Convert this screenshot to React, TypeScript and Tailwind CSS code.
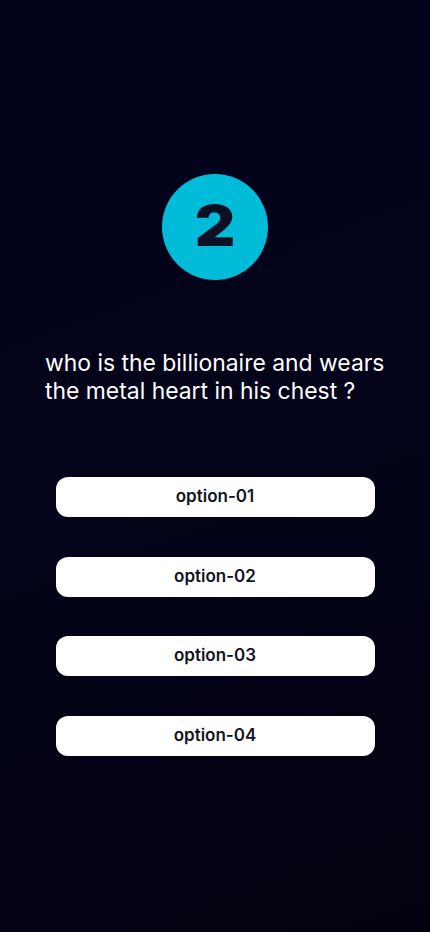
const options = ["option-01", "option-02", "option-03", "option-04"];

export default function App() {
  return (
    <div className="min-h-[932px] w-full bg-[linear-gradient(160deg,#00021a_0%,#03041a_45%,#02010f_100%)] font-['Inter',sans-serif] flex flex-col">
      <div className="mt-[174px] mx-auto w-[106px] h-[106px] rounded-full bg-[#00bcd8] flex items-center justify-center">
        <span className="text-[56px] leading-none font-black text-[#0b1024] scale-x-[1.12] -mt-[2px]">2</span>
      </div>

      <p className="mt-[69px] px-[45px] text-[22.9px] leading-[28px] text-white">
        who is the billionaire and wears the metal heart in his chest ?
      </p>

      <div className="mt-[72px] flex flex-col gap-[39.5px] items-center">
        {options.map((opt) => (
          <button
            key={opt}
            className="w-[319px] h-[40px] rounded-[12px] bg-white text-[17px] font-semibold text-[#121322]"
          >
            {opt}
          </button>
        ))}
      </div>
    </div>
  );
}
